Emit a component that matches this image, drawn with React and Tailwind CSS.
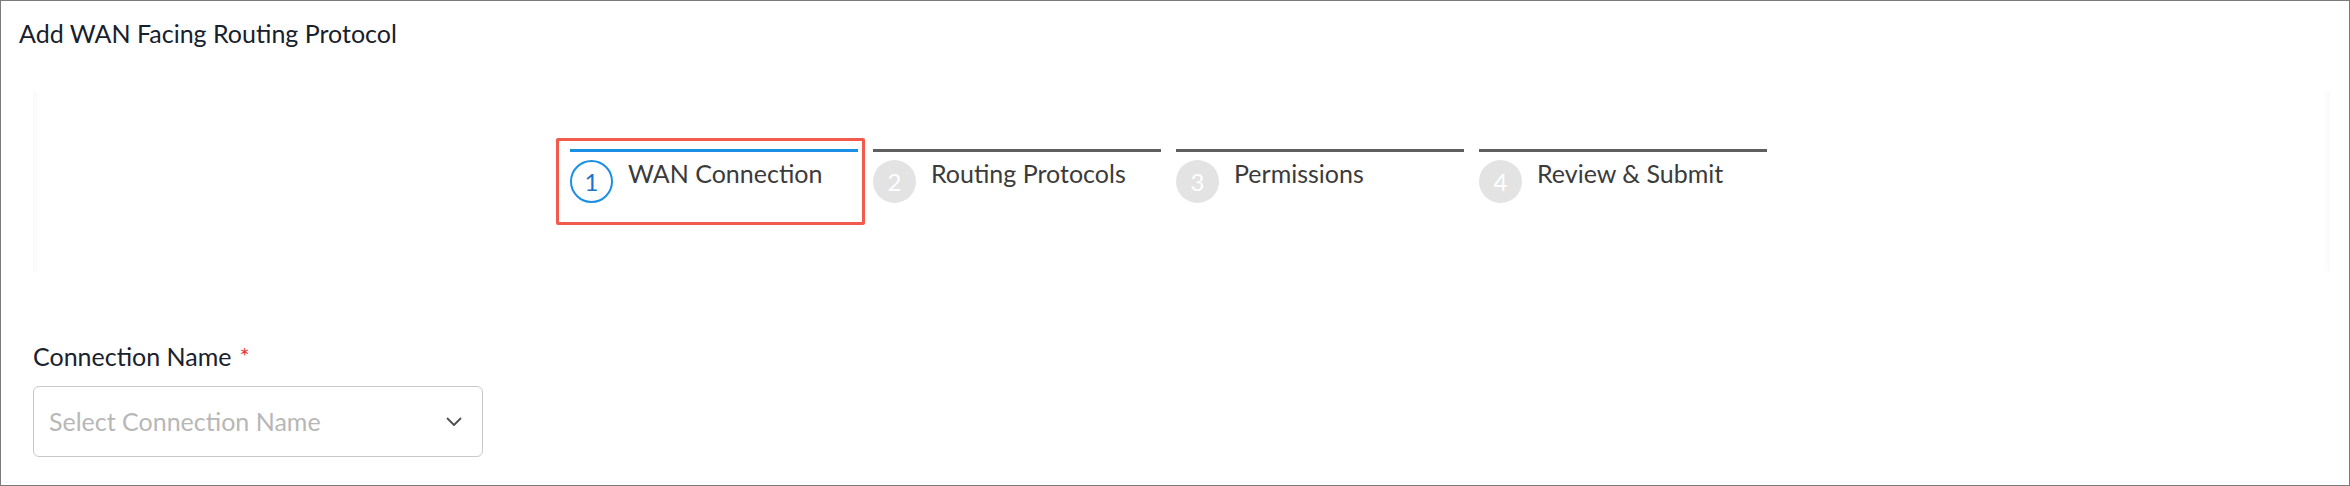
import React from "react"

const steps = [
  { n: 1, label: "WAN Connection", active: true },
  { n: 2, label: "Routing Protocols" },
  { n: 3, label: "Permissions" },
  { n: 4, label: "Review & Submit" },
]

const Step = ({ step }) => {
  return (
    <div className="relative w-[288px] shrink-0">
      <div
        className={
          step.active ? "h-[3px] bg-[#1b8fe4]" : "h-[3px] bg-[#5f5f5f]"
        }
      />
      <div className="mt-[8px] flex items-start">
        {step.active ? (
          <div className="w-[43px] h-[43px] rounded-full border-2 border-[#1b8fe4] bg-white flex items-center justify-center text-[24px] leading-none text-[#1a72c9]">
            {step.n}
          </div>
        ) : (
          <div className="w-[43px] h-[43px] rounded-full bg-[#e3e3e3] flex items-center justify-center text-[24px] leading-none text-white">
            {step.n}
          </div>
        )}
        <div className="ml-[15px] mt-[-2px] text-[25px] leading-[30px] text-[#3b3b3b]">
          {step.label}
        </div>
      </div>
      {step.active && (
        <div className="absolute left-[-14px] top-[-11px] w-[309px] h-[87px] border-[3px] border-[#f25a4b] rounded-[2px]" />
      )}
    </div>
  )
}

const App = () => {
  return (
    <div className="w-[2350px] h-[486px] border border-[#7b7b7b] bg-white font-['Lato','Noto_Sans',sans-serif] overflow-hidden">
      <h1 className="pl-[18px] pt-[17px] text-[25px] leading-[30px] text-[#17212c]">
        Add WAN Facing Routing Protocol
      </h1>

      <div className="ml-[32px] mt-[44px] w-[2297px] h-[180px] bg-white shadow-[inset_9px_0_8px_-7px_rgba(0,0,0,0.035),inset_-9px_0_8px_-7px_rgba(0,0,0,0.035)]">
        <div className="flex justify-center gap-[15px] pt-[57px] pr-[26px]">
          {steps.map((s) => (
            <Step key={s.n} step={s} />
          ))}
        </div>
      </div>

      <div className="ml-[32px] mt-[69px]">
        <label className="flex items-start text-[25px] leading-[30px] text-[#19222d]">
          Connection Name
          <span className="ml-[8px] mt-[3px] text-[24px] leading-[24px] text-[#e53935]">*</span>
        </label>
        <div className="mt-[15px] w-[450px] h-[71px] border border-[#c9c9c9] rounded-[6px] flex items-center justify-between pl-[15px] pr-[20px]">
          <span className="text-[25px] text-[#b7b7b7]">Select Connection Name</span>
          <svg width="16" height="10" viewBox="0 0 16 10" fill="none">
            <polyline
              points="1.5,1.5 8,8 14.5,1.5"
              stroke="#4f4f4f"
              strokeWidth="1.8"
              strokeLinecap="round"
              strokeLinejoin="round"
            />
          </svg>
        </div>
      </div>
    </div>
  )
}

export default App
